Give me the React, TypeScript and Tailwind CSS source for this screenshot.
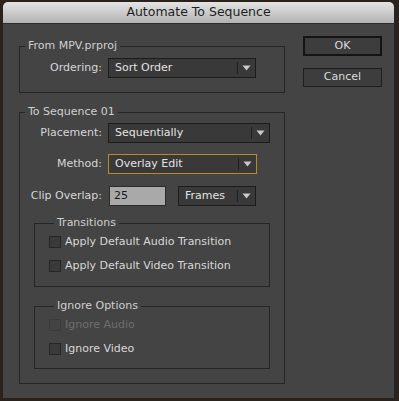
import React from "react";

const font = { fontFamily: '"DejaVu Sans", "Liberation Sans", sans-serif' };

function Caret() {
  return (
    <svg width="9" height="6" viewBox="0 0 9 6">
      <path d="M0.5 0.5 L8.5 0.5 L4.5 5.5 Z" fill="#c9c9c9" />
    </svg>
  );
}

function Dropdown({ value, w, focused }: { value: string; w: string; focused?: boolean }) {
  return (
    <div
      className={`flex h-[20px] items-stretch bg-[#393939] ${w} ${
        focused ? "border border-[#b98a2c]" : "border border-[#1c1c1c]"
      }`}
    >
      <div className="flex flex-1 items-center pl-[6px] text-[#e2e2e2]">{value}</div>
      <div className="my-[3px] w-px bg-[#1f1f1f]" />
      <div className="flex w-[17px] items-center justify-center">
        <Caret />
      </div>
    </div>
  );
}

function Label({ children }: { children: React.ReactNode }) {
  return <div className="w-[88px] shrink-0 pr-[6px] text-right text-[#d6d6d6]">{children}</div>;
}

function Check({ label, disabled }: { label: string; disabled?: boolean }) {
  return (
    <div className="flex h-[18px] items-center">
      <div
        className={`h-[12px] w-[12px] border ${
          disabled ? "border-[#3a3a3a] bg-[#434343]" : "border-[#262626] bg-[#3a3a3a]"
        }`}
      />
      <span className={`ml-[4px] ${disabled ? "text-[#6e6e6e]" : "text-[#d8d8d8]"}`}>{label}</span>
    </div>
  );
}

function Group({
  title,
  className,
  children,
}: {
  title: string;
  className: string;
  children: React.ReactNode;
}) {
  return (
    <fieldset className={`border border-[#262626] ${className}`}>
      <legend className="ml-[5px] px-[3px] leading-[14px] text-[#cfcfcf]">{title}</legend>
      {children}
    </fieldset>
  );
}

export default function App() {
  return (
    <div
      className="h-[401px] w-[399px] overflow-hidden bg-[#2a221c] pl-[3px] pt-[2px] text-[11px]"
      style={font}
    >
      <div className="flex h-[396px] w-[391px] flex-col overflow-hidden rounded-t-[5px] bg-[#444444]">
        <div className="flex h-[22px] shrink-0 items-center justify-center border-b border-[#2c2c2c] bg-gradient-to-b from-[#e4e4e4] to-[#b3b3b3] text-[12.5px] text-[#1e1e1e]">
          Automate To Sequence
        </div>
        <div className="flex pl-[16px] pt-[15px]">
          <div className="flex w-[266px] flex-col">
            <Group title="From MPV.prproj" className="pb-[14px] pt-[5px]">
              <div className="flex items-center">
                <Label>Ordering:</Label>
                <Dropdown value="Sort Order" w="w-[148px]" />
              </div>
            </Group>
            <Group title="To Sequence 01" className="mt-[12px] pb-[14px] pt-[4px]">
              <div className="flex items-center">
                <Label>Placement:</Label>
                <Dropdown value="Sequentially" w="w-[162px]" />
              </div>
              <div className="mt-[11px] flex items-center">
                <Label>Method:</Label>
                <Dropdown value="Overlay Edit" w="w-[149px]" focused />
              </div>
              <div className="mt-[12px] flex items-center">
                <Label>Clip Overlap:</Label>
                <div className="ml-[1px] flex h-[20px] w-[57px] items-center border border-[#2a2a2a] bg-[#a9a9a9] pl-[4px] text-[#1a1a1a]">
                  25
                </div>
                <div className="ml-[12px]">
                  <Dropdown value="Frames" w="w-[78px]" />
                </div>
              </div>
              <Group title="Transitions" className="ml-[14px] mt-[10px] w-[236px] pb-[11px] pl-[14px] pt-[3px]">
                <Check label="Apply Default Audio Transition" />
                <div className="mt-[6px]">
                  <Check label="Apply Default Video Transition" />
                </div>
              </Group>
              <Group title="Ignore Options" className="ml-[14px] mt-[12px] w-[236px] pb-[10px] pl-[14px] pt-[3px]">
                <Check label="Ignore Audio" disabled />
                <div className="mt-[6px]">
                  <Check label="Ignore Video" />
                </div>
              </Group>
            </Group>
          </div>
          <div className="-mt-[3px] ml-[18px] flex flex-col">
            <div className="flex h-[20px] w-[79px] items-center justify-center border-2 border-[#141414] bg-[#3d3d3d] text-[#dcdcdc]">
              OK
            </div>
            <div className="mt-[12px] flex h-[19px] w-[79px] items-center justify-center border border-[#1f1f1f] bg-[#3d3d3d] text-[#dcdcdc]">
              Cancel
            </div>
          </div>
        </div>
      </div>
    </div>
  );
}
